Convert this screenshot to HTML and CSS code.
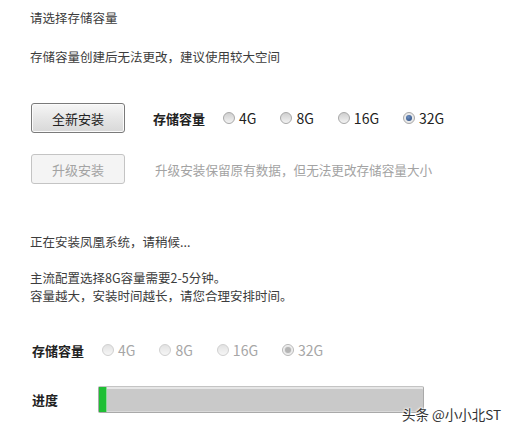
FILE: index.html
```html
<!DOCTYPE html>
<html lang="zh-CN">
<head>
    <meta charset="UTF-8">
    <title>安装凤凰系统</title>
    <link rel="stylesheet" href="styles.css">
</head>
<body>
    <div class="page">
        <p class="tip">请选择存储容量</p>
        <p class="tip note">存储容量创建后无法更改，建议使用较大空间</p>

        <!-- 安装方式 -->
        <div class="row first">
            <button class="btn">全新安装</button>
            <span class="field-label">存储容量</span>
            <div class="options">
                <label class="option"><span class="radio"></span>4G</label>
                <label class="option"><span class="radio"></span>8G</label>
                <label class="option"><span class="radio"></span>16G</label>
                <label class="option"><span class="radio checked"></span>32G</label>
            </div>
        </div>
        <div class="row second">
            <button class="btn" disabled>升级安装</button>
            <span class="hint">升级安装保留原有数据，但无法更改存储容量大小</span>
        </div>

        <!-- 安装进度 -->
        <p class="tip status">正在安装凤凰系统，请稍候...</p>
        <p class="tip info">主流配置选择8G容量需要2-5分钟。</p>
        <p class="tip info-next">容量越大，安装时间越长，请您合理安排时间。</p>

        <div class="row third">
            <span class="field-label short">存储容量</span>
            <div class="options disabled">
                <label class="option"><span class="radio"></span>4G</label>
                <label class="option"><span class="radio"></span>8G</label>
                <label class="option"><span class="radio"></span>16G</label>
                <label class="option"><span class="radio checked"></span>32G</label>
            </div>
        </div>
        <div class="row progress-row">
            <span class="field-label short">进度</span>
            <div class="progress">
                <div class="progress-fill" style="width: 7px"></div>
            </div>
        </div>
    </div>
    <div class="watermark">头条 @小小北ST</div>
</body>
</html>
```

FILE: styles.css
```css
body {
    margin: 0;
    background: #fff;
    font-family: "Noto Sans CJK SC", "Noto Sans", sans-serif;
    font-size: 12.5px;
    color: #3c3c3c;
}
.page {
    padding: 8px 0 0 30px;
}
p {
    margin: 0;
}
.tip {
    line-height: 20px;
}
.note {
    margin-top: 19px;
}
.row {
    display: flex;
    align-items: center;
}
.first {
    margin-top: 36px;
    padding-left: 1px;
}
.second {
    margin-top: 21px;
    padding-left: 1px;
}
.btn {
    width: 94px;
    height: 30px;
    padding: 0;
    font-family: inherit;
    font-size: 13px;
    color: #222;
    border: 1px solid #7a7a7a;
    border-radius: 3px;
    background: linear-gradient(#f6f6f6, #e6e6e6 50%, #d8d8d8);
    box-shadow: inset 0 0 0 1px #fbfbfb;
}
.btn:disabled {
    color: #a3a3a3;
    border-color: #c4c4c4;
    background: #f4f4f4;
    box-shadow: none;
}
.field-label {
    margin-left: 28px;
    font-size: 13px;
    font-weight: bold;
    color: #222;
}
.field-label.short {
    margin-left: 2px;
}
.options {
    display: flex;
    margin-left: 18px;
    gap: 24px;
}
.option {
    display: flex;
    align-items: center;
    gap: 4px;
    font-size: 14px;
    color: #222;
}
.radio {
    position: relative;
    width: 12px;
    height: 12px;
    box-sizing: border-box;
    border-radius: 50%;
    border: 1px solid #a8a8a8;
    background: linear-gradient(#cfcfcf, #f3f3f3);
}
.radio.checked {
    background: #eaeaea;
}
.radio.checked::after {
    content: "";
    position: absolute;
    left: 2px;
    top: 2px;
    width: 6px;
    height: 6px;
    border-radius: 50%;
    background: radial-gradient(circle at 40% 35%, #6f8fc0, #23467a);
}
.disabled .option {
    color: #a6a6a6;
}
.disabled .radio {
    border-color: #d0d0d0;
    background: linear-gradient(#e2e2e2, #f6f6f6);
}
.disabled .radio.checked {
    border-color: #b8b8b8;
    background: #f2f2f2;
}
.disabled .radio.checked::after {
    background: #b4b4b4;
    box-shadow: 0 0 0 1px #e4e4e4;
}
.hint {
    margin-left: 30px;
    font-size: 12.6px;
    color: #a3a3a3;
}
.status {
    margin-top: 48px;
}
.info {
    margin-top: 17px;
    line-height: 18px;
}
.info-next {
    line-height: 18px;
}
.third {
    margin-top: 35px;
    height: 20px;
}
.progress-row {
    margin-top: 26px;
}
.progress {
    width: 326px;
    height: 27px;
    margin-left: 40px;
    box-sizing: border-box;
    border: 1px solid #a9a9a9;
    border-top-color: #c4c4c4;
    border-radius: 2px;
    background: #c9c9c9;
    box-shadow: inset 0 2px 0 #e6e6e6, inset 0 -1px 0 #dadada;
    display: flex;
}
.progress-fill {
    background: #1fbf34;
    border-right: 1px solid #8ed89a;
}
.watermark {
    position: absolute;
    left: 402px;
    top: 404px;
    font-size: 13.5px;
    color: #333;
    text-shadow: 0 0 2px #fff, 0 0 2px #fff, 0 0 3px #fff;
}
```
